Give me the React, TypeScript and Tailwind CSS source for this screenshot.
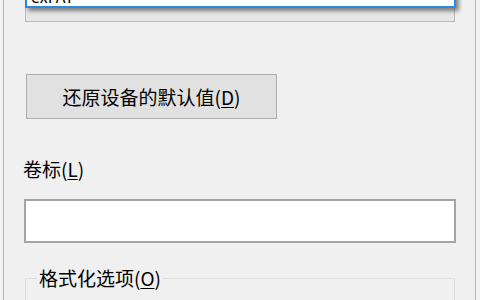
import React from "react";

const font = { fontFamily: '"Noto Sans CJK SC", "Noto Sans", sans-serif' };

function U({ children }: { children: React.ReactNode }) {
  return <span className="underline underline-offset-[2px] decoration-[1px]">{children}</span>;
}

export default function App() {
  return (
    <div className="relative flex h-[300px] w-[480px] overflow-hidden bg-[#f0f0f0] text-[19px] leading-none text-black" style={font}>
      <div className="w-[3px] shrink-0 bg-[#f3f3f3]" />
      <div className="w-[1px] shrink-0 bg-[#e4ab6b]" />
      <div className="flex flex-1 flex-col pl-[21px]">
        <div className="h-[22px] w-[430px] shrink-0 border border-t-0 border-[#b9b9b9] bg-[#e6e6e6]" />
        <button className="mt-[52px] ml-[1px] flex h-[45px] w-[251px] shrink-0 items-center justify-center border border-[#adadad] bg-[#e1e1e1] text-[19px] leading-none text-black" style={font}>
          还原设备的默认值(<U>D</U>)
        </button>
        <div className="mt-[40px] ml-[-2px] h-[19px] shrink-0">
          卷标(<U>L</U>)
        </div>
        <div className="mt-[21px] ml-[-1px] h-[44px] w-[432px] shrink-0 border-2 border-[#a3a3a3] bg-white" />
        <div className="relative mt-[35px] h-[40px] w-[430px] shrink-0 border border-[#dcdcdc]">
          <div className="absolute left-[11px] top-[-11px] bg-[#f0f0f0] px-[2px]">
            格式化选项(<U>O</U>)
          </div>
        </div>
      </div>
      <div className="w-[1px] shrink-0 bg-[#e4ab6b]" />
      <div className="w-[4px] shrink-0 bg-[#f3f3f3]" />

      <div className="absolute left-[25px] top-[-30px] h-[38px] w-[431px] border-2 border-[#2a8ae0] bg-white shadow-[3px_3px_4px_rgba(0,0,0,0.45)]">
        <div className="absolute bottom-[2px] left-[4px] text-[16px] leading-none text-black">exFAT</div>
      </div>
    </div>
  );
}
